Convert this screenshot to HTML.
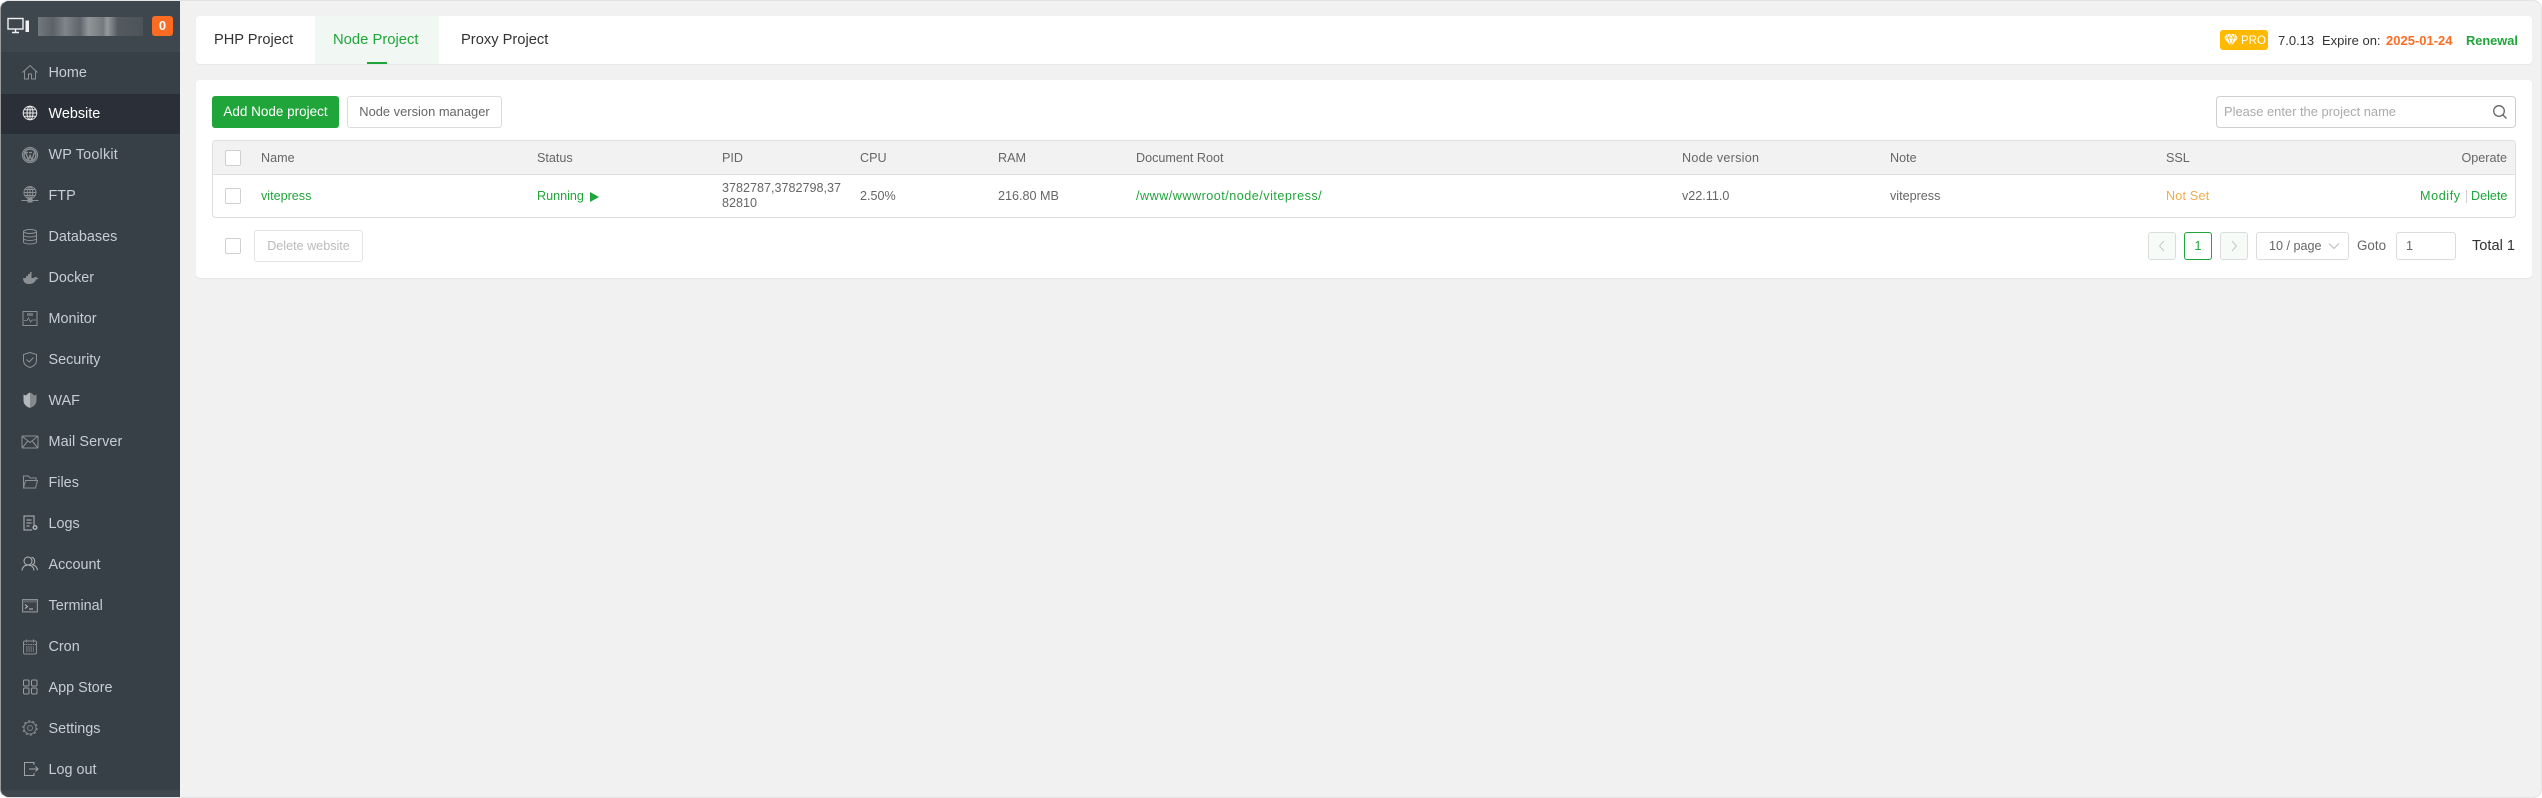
<!DOCTYPE html>
<html><head><meta charset="utf-8"><title>Node Project</title>
<style>
*{box-sizing:border-box}
html,body{margin:0;padding:0;width:2542px;height:798px;overflow:hidden;background:#fff;font-family:"Liberation Sans",sans-serif}
#w{position:absolute;left:0;top:0;width:2542px;height:798px;background:#f1f1f1;border-radius:9px;overflow:hidden;border:1px solid #e4e4e4;border-left-color:#9a9a9a}
#i{position:absolute;left:-1px;top:-1px;width:2542px;height:798px}
.a{position:absolute;white-space:nowrap}
#side{position:absolute;left:1px;top:0;width:179px;height:798px;background:#384047}
#hd{position:absolute;left:0;top:0;width:179px;height:52px;background:#3f474e}
#ft{position:absolute;left:0;top:790px;width:179px;height:8px;background:#3f474e}
#act{position:absolute;left:0;top:94px;width:179px;height:40px;background:#2b3038}
.m{position:absolute;left:47.500px;font-size:14.400px;line-height:20px;color:#c6cdd4;white-space:nowrap}
.ic{position:absolute;left:20px;width:18px;height:18px;fill:none;stroke:#8b9095;stroke-width:1}
.card{position:absolute;background:#fff;border-radius:4px;box-shadow:0 1px 1px rgba(0,0,0,.05)}
.t{position:absolute;white-space:nowrap;font-size:12.600px;line-height:16px;color:#666}
.g{color:#20a53a}
.cb{position:absolute;width:16px;height:16px;background:#fff;border:1px solid #d0d0d0;border-radius:2px}
.b{position:absolute;height:32px;border-radius:3px;font-size:12.600px;line-height:30px;text-align:center;white-space:nowrap}
.pg{position:absolute;top:232px;height:28px;border:1px solid #dcdcdc;border-radius:3px;font-size:12.600px;line-height:26px;color:#666}
</style></head><body>
<div id="w"><div id="i">

<div id="side">
<div id="hd"></div><div id="ft"></div><div id="act"></div>
<svg class="a" style="left:6px;top:17px;width:24px;height:18px" viewBox="0 0 24 18" fill="none" stroke="#f0f0f0" stroke-width="1.400"><rect x="1" y="1.500" width="15" height="10.500"/><path d="M5 15.500h7M8.500 12v3.500"/><rect x="18.500" y="3.500" width="3.500" height="11.500" fill="#f0f0f0" stroke="none"/></svg>
<div class="a" style="left:37px;top:17px;width:105px;height:19px;background:linear-gradient(90deg,#7c8287 0,#5f666c 14%,#8a8f93 26%,#636a70 40%,#a0a3a5 48%,#7d8286 62%,#a5a8a9 66%,#565d63 76%,#4f565c 100%);opacity:.85"></div>
<div class="a" style="left:151px;top:16px;width:21px;height:20px;background:#fb6b21;border-radius:3px;color:#fff;font-size:13px;font-weight:bold;text-align:center;line-height:20px">0</div>

<svg class="ic" style="top:63px" viewBox="0 0 18 18"><path d="M1.500 9.500 9 2.500l7.500 7M3.500 8v8h4v-5h3v5h4V8"/></svg>
<div class="m" style="top:63px">Home</div>
<svg class="ic" style="top:104px;stroke:#e8e8e8" viewBox="0 0 18 18"><circle cx="9" cy="9" r="6.800"/><ellipse cx="9" cy="9" rx="3" ry="6.800"/><path d="M2.200 9h13.600M3 5.700h12M3 12.300h12M9 2v14"/></svg>
<div class="m" style="top:104px;color:#fff">Website</div>
<svg class="ic" style="top:146px" viewBox="0 0 18 18"><circle cx="9" cy="9" r="7.600"/><circle cx="9" cy="9" r="6" stroke-width="1.400"/><path d="M4.500 6.500 7.500 14 9 9.500 10.700 14 13.500 6.500M4 6.500h3M8 6.500h3" stroke-width="1.300"/></svg>
<div class="m" style="top:145px;letter-spacing:.2px">WP Toolkit</div>
<svg class="ic" style="top:185px" viewBox="0 0 18 18"><circle cx="9" cy="7.500" r="6"/><ellipse cx="9" cy="7.500" rx="2.800" ry="6"/><path d="M3 7.500h12M9 1.500v12M4 4.500h10M4 10.500h10M.5 15.500h17"/><rect x="7" y="14" width="4" height="3" fill="#8b9095"/></svg>
<div class="m" style="top:186px">FTP</div>
<svg class="ic" style="top:228px" viewBox="0 0 18 18"><ellipse cx="9" cy="3.500" rx="6.500" ry="2"/><path d="M2.500 3.500v10.500c0 1.200 3 2 6.500 2s6.500-.8 6.500-2V3.500M2.500 7c0 1.200 3 2 6.500 2s6.500-.8 6.500-2M2.500 10.500c0 1.200 3 2 6.500 2s6.500-.8 6.500-2"/></svg>
<div class="m" style="top:227px">Databases</div>
<svg class="ic" style="top:269px;fill:#8b9095;stroke:none" viewBox="0 0 18 18"><path d="M2 9h3V7h2V5h2V3h1.500v6H13c.5-1 1.500-1.200 2.500-1 .3.300.2.700 0 1l2 .3c-.5 1-1.500 1.200-2.500 1.200C14 14 11 15 7.500 15 4 15 2.200 13 2 9z"/></svg>
<div class="m" style="top:268px">Docker</div>
<svg class="ic" style="top:310px" viewBox="0 0 18 18"><rect x="2" y="1.500" width="14" height="14"/><rect x="6" y="3" width="6" height="3" fill="#6d7277" stroke="none"/><path d="M3 10.500h3l1.500-2.500 2 4 1.500-2h4" stroke-width=".8"/></svg>
<div class="m" style="top:309px">Monitor</div>
<svg class="ic" style="top:351px" viewBox="0 0 18 18"><path d="M9 1.500 15.500 3.500v6c0 3.500-3 5.800-6.500 7-3.500-1.200-6.500-3.500-6.500-7v-6z"/><path d="M5.500 8.500 8.200 11l4.300-4.500"/></svg>
<div class="m" style="top:350px">Security</div>
<svg class="ic" style="top:391px;stroke:none" viewBox="0 0 18 18"><path d="M9 1.500v15.500C5 15.500 2.500 13 2.500 9.500v-6L5 4.500l2-2z" fill="#b4b7ba"/><path d="M9 1.500v15.500c4-1.500 6.500-4 6.500-7.500v-6L13 4.500l-2-2z" fill="#85898d"/></svg>
<div class="m" style="top:391px">WAF</div>
<svg class="ic" style="top:433px" viewBox="0 0 18 18"><rect x="1" y="3" width="16" height="12" rx="1"/><path d="M1.500 3.500 9 9.500l7.500-6M1.500 14.500l5.300-6.500M16.500 14.500l-5.300-6.500"/></svg>
<div class="m" style="top:432px;letter-spacing:.1px">Mail Server</div>
<svg class="ic" style="top:473px" viewBox="0 0 18 18"><path d="M2.500 15V3h5l1.500 2h6v2.500M2.500 15h12l2-7.500H4.500z"/></svg>
<div class="m" style="top:473px">Files</div>
<svg class="ic" style="top:514px;stroke:#b4b8bb" viewBox="0 0 18 18"><path d="M13 11V2H3v14h8M5.500 6h5M5.500 9h5M5.500 12h3"/><circle cx="14" cy="13.500" r="1.800" stroke-width="1.400"/></svg>
<div class="m" style="top:514px">Logs</div>
<svg class="ic" style="top:555px;stroke:#b4b8bb" viewBox="0 0 18 18"><circle cx="7" cy="6" r="4"/><path d="M1 15.500c.3-3.500 2.800-5.500 6-5.500s5.700 2 6 5.500M10.500 2.200a4 4 0 0 1 1 7.500c2.500.5 4.500 2.500 5 5.500"/></svg>
<div class="m" style="top:555px">Account</div>
<svg class="ic" style="top:597px" viewBox="0 0 18 18"><rect x="1.500" y="2.500" width="15" height="12.500" fill="#5d6368"/><rect x="2.500" y="5.500" width="13" height="8.500" fill="#3b4248" stroke="none"/><path d="M4 7.500l2.500 2L4 11.500M8 12h4" stroke="#c0c3c6"/></svg>
<div class="m" style="top:596px">Terminal</div>
<svg class="ic" style="top:638px" viewBox="0 0 18 18"><rect x="2.500" y="3" width="13" height="13" rx="1.500"/><path d="M5.500 1.500v3M12.500 1.500v3M2.500 6.500h13M5 9h8M5 11h8M5 13h8" stroke-dasharray="1.500 .8"/></svg>
<div class="m" style="top:637px">Cron</div>
<svg class="ic" style="top:678px;stroke:#9a9ea2" viewBox="0 0 18 18"><rect x="2.500" y="2" width="5.500" height="6" rx="1.200"/><rect x="10.500" y="2" width="5.500" height="6" rx="1.200"/><rect x="2.500" y="10" width="5.500" height="6" rx="1.200"/><rect x="10.500" y="10" width="5.500" height="6" rx="1.200"/></svg>
<div class="m" style="top:678px">App Store</div>
<svg class="ic" style="top:719px;stroke:#7f8488" viewBox="0 0 18 18"><circle cx="9" cy="9" r="2.500"/><circle cx="9" cy="9" r="6"/><circle cx="9" cy="9" r="7" stroke-width="1.400" stroke-dasharray="2.200 2.200"/></svg>
<div class="m" style="top:719px">Settings</div>
<svg class="ic" style="top:760px;stroke:#a0a4a7" viewBox="0 0 18 18"><path d="M13 5V2.500H3.500v13H13V13M8 9h9M14.500 6.500 17 9l-2.500 2.500"/></svg>
<div class="m" style="top:760px">Log out</div>
</div>

<div class="card" style="left:196px;top:16px;width:2336px;height:48px">
<div class="a" style="left:119px;top:0;width:124px;height:48px;background:#f1f8f3"></div>
<div class="a" style="left:171px;top:46px;width:20px;height:2px;background:#20a53a"></div>
<div class="a" style="left:18px;top:14px;font-size:14.600px;line-height:20px;color:#333">PHP Project</div>
<div class="a" style="left:137px;top:14px;font-size:14.800px;line-height:20px;color:#20a53a">Node Project</div>
<div class="a" style="left:265px;top:14px;font-size:14.700px;line-height:20px;color:#333">Proxy Project</div>
</div>
<div class="a" style="left:2220px;top:30px;width:48px;height:20px;background:#ffb900;border-radius:3px"></div>
<svg class="a" style="left:2224px;top:33px;width:14px;height:14px" viewBox="0 0 14 14" fill="#fff"><path d="M3 1h8l3 4-7 8-7-8z"/><path d="M0 5h14M4.500 5 7 13l2.500-8M3 1l1.500 4L7 1l2.500 4L11 1" fill="none" stroke="#ffb900" stroke-width=".7"/></svg>
<div class="a" style="left:2241px;top:33px;font-size:11.500px;line-height:16px;color:#fff">PRO</div>
<div class="a" style="left:2278px;top:32px;font-size:13px;line-height:18px;color:#333">7.0.13</div>
<div class="a" style="left:2322px;top:32px;font-size:13px;line-height:18px;color:#333">Expire on:</div>
<div class="a" style="left:2386px;top:32px;font-size:13px;line-height:18px;color:#fc6d26;font-weight:bold">2025-01-24</div>
<div class="a" style="left:2466px;top:32px;font-size:12.800px;line-height:18px;color:#20a53a;font-weight:bold">Renewal</div>

<div class="card" style="left:196px;top:80px;width:2336px;height:198px"></div>
<div class="b" style="left:212px;top:96px;width:127px;background:#20a53a;color:#fff;line-height:32px;font-size:13.500px">Add Node project</div>
<div class="b" style="left:347px;top:96px;width:155px;background:#fff;border:1px solid #dcdcdc;color:#666;font-size:12.900px">Node version manager</div>
<div class="a" style="left:2216px;top:96px;width:300px;height:32px;background:#fff;border:1px solid #cfcfcf;border-radius:4px"></div>
<div class="a" style="left:2224px;top:104px;font-size:12.900px;line-height:16px;color:#aaa">Please enter the project name</div>
<svg class="a" style="left:2492px;top:104px;width:16px;height:16px" viewBox="0 0 16 16" fill="none" stroke="#666" stroke-width="1.300"><circle cx="7" cy="7" r="5.300"/><path d="M11 11l3.500 3.500"/></svg>

<div class="a" style="left:212px;top:140px;width:2304px;height:78px;border:1px solid #dedede;border-radius:4px;background:#fff;overflow:hidden">
<div class="a" style="left:0;top:0;width:100%;height:34px;background:#f2f2f2;border-bottom:1px solid #dedede"></div>
</div>
<div class="cb" style="left:225px;top:150px"></div>
<div class="t" style="left:261px;top:150px">Name</div>
<div class="t" style="left:537px;top:150px">Status</div>
<div class="t" style="left:722px;top:150px">PID</div>
<div class="t" style="left:860px;top:150px">CPU</div>
<div class="t" style="left:998px;top:150px">RAM</div>
<div class="t" style="left:1136px;top:150px">Document Root</div>
<div class="t" style="left:1682px;top:150px;letter-spacing:.25px">Node version</div>
<div class="t" style="left:1890px;top:150px">Note</div>
<div class="t" style="left:2166px;top:150px">SSL</div>
<div class="t" style="right:35px;top:150px">Operate</div>

<div class="cb" style="left:225px;top:188px"></div>
<div class="t g" style="left:261px;top:188px">vitepress</div>
<div class="t g" style="left:537px;top:188px">Running</div>
<div class="a" style="left:590px;top:192px;width:0;height:0;border-left:9px solid #20a53a;border-top:5px solid transparent;border-bottom:5px solid transparent"></div>
<div class="t" style="left:722px;top:181px;line-height:15px;white-space:normal;width:122px;word-break:break-all">3782787,3782798,37<br>82810</div>
<div class="t" style="left:860px;top:188px">2.50%</div>
<div class="t" style="left:998px;top:188px">216.80 MB</div>
<div class="t g" style="left:1136px;top:188px;letter-spacing:.5px">/www/wwwroot/node/vitepress/</div>
<div class="t" style="left:1682px;top:188px">v22.11.0</div>
<div class="t" style="left:1890px;top:188px">vitepress</div>
<div class="t" style="left:2166px;top:188px;color:#f0ad4e;letter-spacing:.2px">Not Set</div>
<div class="t g" style="left:2420px;top:188px;letter-spacing:.6px">Modify</div>
<div class="a" style="left:2466px;top:190px;width:1px;height:13px;background:#cfcfcf"></div>
<div class="t g" style="left:2471px;top:188px">Delete</div>

<div class="cb" style="left:225px;top:238px"></div>
<div class="b" style="left:254px;top:230px;width:109px;background:#fff;border:1px solid #e4e4e4;color:#bbb">Delete website</div>

<div class="pg" style="left:2148px;width:28px;background:#f7fbf7"><svg class="a" style="left:8px;top:7px;width:10px;height:12px" viewBox="0 0 10 12" fill="none" stroke="#c4c8c4"><path d="M7 1 2.500 6 7 11"/></svg></div>
<div class="pg" style="left:2184px;width:28px;border-color:#20a53a;color:#20a53a;text-align:center;background:#fff">1</div>
<div class="pg" style="left:2220px;width:28px;background:#f7fbf7"><svg class="a" style="left:8px;top:7px;width:10px;height:12px" viewBox="0 0 10 12" fill="none" stroke="#c4c8c4"><path d="M3 1 7.500 6 3 11"/></svg></div>
<div class="pg" style="left:2256px;width:93px;background:#fff;padding-left:12px">10 / page<svg class="a" style="left:71px;top:9px;width:12px;height:8px" viewBox="0 0 12 8" fill="none" stroke="#bbb"><path d="M1 1.500 6 6.500 11 1.500"/></svg></div>
<div class="t" style="left:2357px;top:238px;font-size:13.400px">Goto</div>
<div class="pg" style="left:2396px;width:60px;background:#fff;padding-left:9px">1</div>
<div class="a" style="left:2472px;top:237px;font-size:14.600px;line-height:18px;color:#333">Total 1</div>

</div></div>
</body></html>
